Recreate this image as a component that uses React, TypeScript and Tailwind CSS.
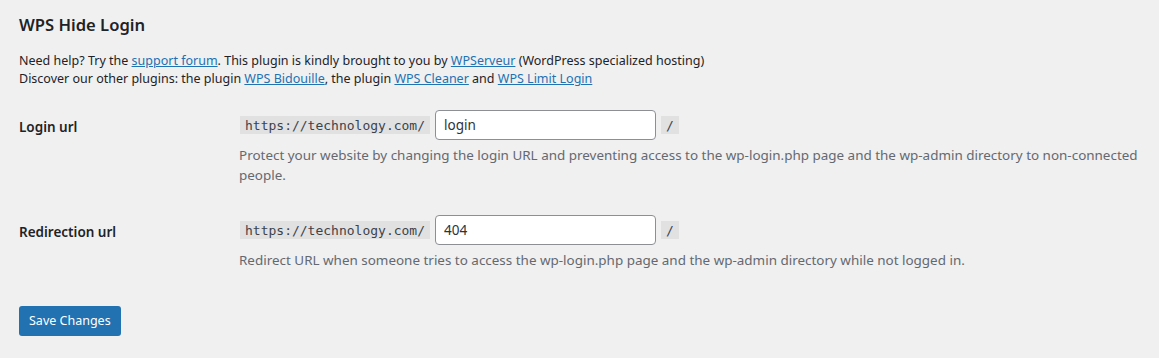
import React, { useState } from "react";

const sans = "font-['Noto_Sans','Open_Sans',sans-serif]";
const mono = "font-['DejaVu_Sans_Mono','Liberation_Mono',monospace]";

function UrlField({ value, onChange, help }: { value: string; onChange: (v: string) => void; help: string }) {
  return (
    <div className="flex flex-col">
      <div className="flex items-center gap-[5px] pl-px">
        <code className={`${mono} text-[13px] leading-[17px] bg-[#0000000f] px-[5px] pt-[1px] text-[#3c434a]`}>https://technology.com/</code>
        <input
          type="text"
          value={value}
          onChange={(e) => onChange(e.target.value)}
          className={`${sans} w-[221px] h-[30px] bg-white border border-[#8c8f94] rounded-[4px] px-[8px] text-[13.5px] text-[#2c3338] outline-none`}
        />
        <code className={`${mono} text-[13px] leading-[17px] bg-[#0000000f] px-[5px] pt-[1px] text-[#3c434a]`}>/</code>
      </div>
      <p className="mt-[5px] text-[13.45px] leading-[20px] text-[#646970]">{help}</p>
    </div>
  );
}

export default function App() {
  const [loginUrl, setLoginUrl] = useState("login");
  const [redirectUrl, setRedirectUrl] = useState("404");

  return (
    <div className={`${sans} min-h-screen bg-[#f0f0f1] text-[#1d2327] pl-[19px] pr-[12px] pt-[14px]`}>
      <h2 className="text-[16.6px] leading-[22px] font-semibold">WPS Hide Login</h2>

      <p className="mt-[16px] text-[12.5px] leading-[18px]">
        Need help? Try the <a href="#" className="text-[#2271b1] underline">support forum</a>. This plugin is kindly brought to you by{" "}
        <a href="#" className="text-[#2271b1] underline">WPServeur</a> (WordPress specialized hosting)
        <br />
        Discover our other plugins: the plugin <a href="#" className="text-[#2271b1] underline">WPS Bidouille</a>, the plugin{" "}
        <a href="#" className="text-[#2271b1] underline">WPS Cleaner</a> and{" "}
        <a href="#" className="text-[#2271b1] underline">WPS Limit Login</a>
      </p>

      <div className="mt-[7px]">
        <div className="flex">
          <div className="w-[210px] shrink-0 pt-[23px] text-[13.5px] leading-[18px] font-semibold">Login url</div>
          <div className="flex-1 py-[15px] pl-[10px]">
            <UrlField
              value={loginUrl}
              onChange={setLoginUrl}
              help="Protect your website by changing the login URL and preventing access to the wp-login.php page and the wp-admin directory to non‑connected people."
            />
          </div>
        </div>
        <div className="flex">
          <div className="w-[210px] shrink-0 pt-[23px] text-[13.5px] leading-[18px] font-semibold">Redirection url</div>
          <div className="flex-1 py-[15px] pl-[10px]">
            <UrlField
              value={redirectUrl}
              onChange={setRedirectUrl}
              help="Redirect URL when someone tries to access the wp-login.php page and the wp-admin directory while not logged in."
            />
          </div>
        </div>
      </div>

      <div className="pt-[21px]">
        <button className="h-[30px] px-[10px] rounded-[3px] bg-[#2271b1] text-white text-[12.5px] leading-[28px]">
          Save Changes
        </button>
      </div>
    </div>
  );
}
